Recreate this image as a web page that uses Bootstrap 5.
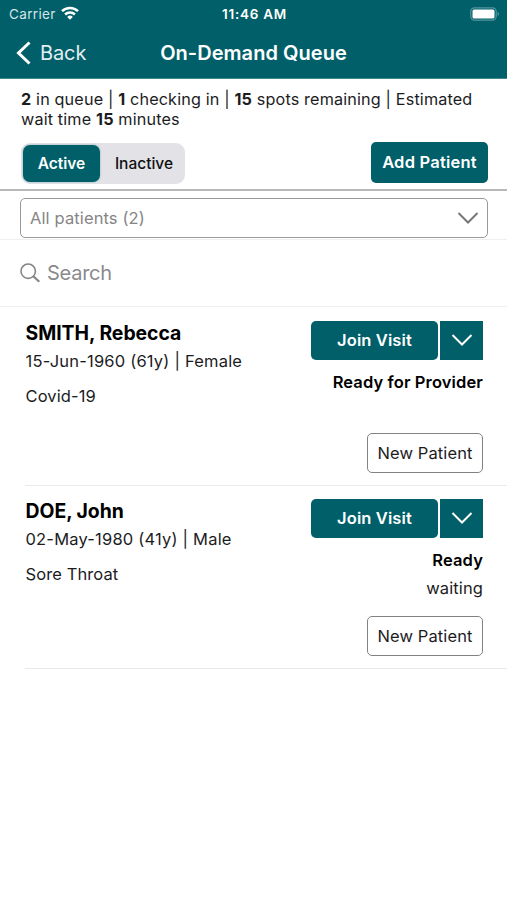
<!DOCTYPE html>
<html lang="en">
<head>
<meta charset="utf-8">
<meta name="viewport" content="width=device-width, initial-scale=1">
<title>On-Demand Queue</title>
<link rel="stylesheet" href="https://cdn.jsdelivr.net/npm/bootstrap@5.3.0/dist/css/bootstrap.min.css">
<style>
  :root { --teal: #005f69; }
  body { font-family: Inter, "Liberation Sans", sans-serif; font-size: 16px; line-height: 20px; color: #1c1c1e; background: #fff; overflow: hidden; }
  svg { display: block; flex: none; }
  .app-header { background: var(--teal); color: #fff; height: 79px; border-bottom: 1px solid #3d8790; }
  .status-bar { height: 27px; font-size: 13.5px; padding: 0 7px 0 9px; }
  .status-bar > *, .title-bar > * { flex: 1 1 0; }
  .carrier { letter-spacing: .35px; color: #d5e6e8; }
  .clock { letter-spacing: .75px; font-weight: 600; }
  .title-bar { height: 51px; padding: 0 16px; font-size: 20px; }
  .title-bar .page-title { flex: none; font-weight: 600; font-size: 20px; line-height: 24px; letter-spacing: .04px; }
  .back-link { color: #e0eff1; gap: 9px; letter-spacing: -.1px; }
  .queue-info { padding: 10px 20px 0 21px; height: 63px; font-size: 16.2px; letter-spacing: .15px; }
  .queue-info b { font-weight: 700; }
  .toolbar { padding: 0 19px 0 21px; height: 47px; }
  .segmented { background: #e3e2e7; border-radius: 9px; width: 164px; height: 41px; padding: 2px; margin-top: 1px; }
  .segmented .btn { font-size: 15.5px; line-height: 20px; font-weight: 500; padding: 0; border: 0; border-radius: 7px; }
  .segmented .btn-on { width: 77px; background: var(--teal); color: #fff; font-weight: 600; box-shadow: 0 0 2px #7aa; }
  .segmented .btn-off { flex: 1; color: #111; padding-left: 5px; }
  .btn-teal, .btn-teal:hover { background: var(--teal); color: #fff; border: 0; padding: 0 0 1px; font-weight: 600; font-size: 16.5px; line-height: 20px; border-radius: 5px; letter-spacing: .12px; }
  .btn-teal.add-btn { width: 117px; height: 41px; letter-spacing: .22px; }
  .filter-area { border-top: 2px solid #b8b8b8; border-bottom: 1px solid #efefef; padding: 7px 19px 0 20px; height: 51px; }
  .filter-box { height: 40px; border: 1.5px solid #999; border-radius: 5px; padding: 0 8px 0 9px; color: #858585; background: #fff; font-size: 16.5px; letter-spacing: .12px; }
  .search-row { height: 67px; padding: 0 20px; border-bottom: 1px solid #efefef; color: #8a8a8e; font-size: 20px; gap: 7px; letter-spacing: -.25px; }
  .visit-row { margin-left: 25px; padding: 14px 24px 12px 0; border-bottom: 1px solid #e9e9e9; font-size: 16.5px; letter-spacing: .2px; }
  .visit-name { font-size: 19.4px; line-height: 24px; font-weight: 700; color: #000; margin-bottom: 6px; letter-spacing: -.03px; }
  .visit-person { margin-left: .5px; }
  .visit-person > div:last-child { margin-top: 15px; letter-spacing: .1px; }
  .visit-actions { gap: 2px; height: 39px; }
  .join-btn { width: 127px; }
  .btn-teal.more-btn { width: 43px; border-radius: 0; }
  .visit-status { min-height: 65px; padding: 4px 0 8px; letter-spacing: .12px; }
  .visit-status > div + div { margin-top: 8px; }
  .tag-btn { width: 116px; height: 40px; border: 1px solid #828282; border-radius: 5px; font-size: 16.5px; line-height: 20px; color: #1c1c1e; padding: 0; letter-spacing: .12px; }
  .visit-row.has-wait { padding-top: 13px; }
  .has-wait .visit-status { min-height: 70px; padding-bottom: 7px; }
</style>
</head>
<body>
<header class="app-header">
  <div class="status-bar d-flex align-items-center">
    <div class="d-flex align-items-center"><span class="carrier">Carrier</span>
      <svg class="ms-1" width="20" height="16" viewBox="0 0 20 16" fill="none" stroke="#fff" stroke-width="2.5"><path d="M2 5.200a11.300 11.300 0 0 1 16 0M5.100 8.500a6.900 6.900 0 0 1 9.800 0"/><path d="M7.200 10.900a4 4 0 0 1 5.600 0L10 13.800z" fill="#fff" stroke="none"/></svg>
    </div>
    <span class="clock text-center">11:46 AM</span>
    <div class="d-flex justify-content-end"><svg width="30" height="14" viewBox="0 0 30 14"><rect x=".8" y=".8" width="25.4" height="12.4" rx="3.6" fill="none" stroke="#5497a0" stroke-width="1.2"/><rect x="2.5" y="2.5" width="22" height="9" rx="1.5" fill="#fff"/><path d="M27.600 4.800q3 2.200 0 4.400z" fill="#5497a0"/></svg></div>
  </div>
  <nav class="title-bar d-flex align-items-center">
    <div class="back-link d-flex align-items-center"><svg width="15" height="24" viewBox="0 0 15 24" fill="none" stroke="#fff" stroke-width="3"><path d="M13.500 1.500 2.500 12l11 10.500"/></svg><span>Back</span></div>
    <h1 class="page-title m-0">On-Demand Queue</h1>
    <div></div>
  </nav>
</header>
<main>
  <p class="queue-info m-0"><b>2</b> in queue | <b>1</b> checking in | <b>15</b> spots remaining | Estimated<br>wait time <b>15</b> minutes</p>
  <div class="toolbar d-flex justify-content-between align-items-start">
    <div class="segmented d-flex"><button class="btn btn-on">Active</button><button class="btn btn-off">Inactive</button></div>
    <button class="btn btn-teal add-btn">Add Patient</button>
  </div>
  <div class="filter-area">
    <div class="filter-box d-flex align-items-center justify-content-between"><span class="filter-text">All patients (2)</span>
      <svg width="22" height="14" viewBox="0 0 22 14" fill="none" stroke="#777" stroke-width="2"><path d="M1.500 2 11 11.500 20.500 2"/></svg></div>
  </div>
  <div class="search-row d-flex align-items-center"><svg width="20" height="20" viewBox="0 0 20 20" fill="none" stroke="#858585" stroke-width="1.6"><circle cx="8.200" cy="8.200" r="7.200"/><path d="m13.300 13.300 6 5.500" stroke-width="2.200"/></svg><span>Search</span></div>

  <section class="visit-row d-flex justify-content-between">
    <div class="visit-person"><h2 class="visit-name">SMITH, Rebecca</h2><div>15-Jun-1960 (61y) | Female</div><div>Covid-19</div></div>
    <div class="d-flex flex-column align-items-end">
      <div class="visit-actions d-flex"><button class="btn btn-teal join-btn">Join Visit</button><button class="btn btn-teal more-btn d-flex align-items-center justify-content-center" aria-label="More"><svg width="22" height="14" viewBox="0 0 22 14" fill="none" stroke="#fff" stroke-width="2"><path d="M1.500 2 11 11.500 20.500 2"/></svg></button></div>
      <div class="visit-status text-end mt-2"><div class="fw-semibold text-black">Ready for Provider</div></div>
      <button class="btn tag-btn">New Patient</button>
    </div>
  </section>
  <section class="visit-row has-wait d-flex justify-content-between">
    <div class="visit-person"><h2 class="visit-name">DOE, John</h2><div>02-May-1980 (41y) | Male</div><div>Sore Throat</div></div>
    <div class="d-flex flex-column align-items-end">
      <div class="visit-actions d-flex"><button class="btn btn-teal join-btn">Join Visit</button><button class="btn btn-teal more-btn d-flex align-items-center justify-content-center" aria-label="More"><svg width="22" height="14" viewBox="0 0 22 14" fill="none" stroke="#fff" stroke-width="2"><path d="M1.500 2 11 11.500 20.500 2"/></svg></button></div>
      <div class="visit-status text-end mt-2"><div class="fw-semibold text-black">Ready</div><div>waiting</div></div>
      <button class="btn tag-btn">New Patient</button>
    </div>
  </section>
</main>
<script src="https://cdn.jsdelivr.net/npm/bootstrap@5.3.0/dist/js/bootstrap.bundle.min.js"></script>
</body>
</html>
